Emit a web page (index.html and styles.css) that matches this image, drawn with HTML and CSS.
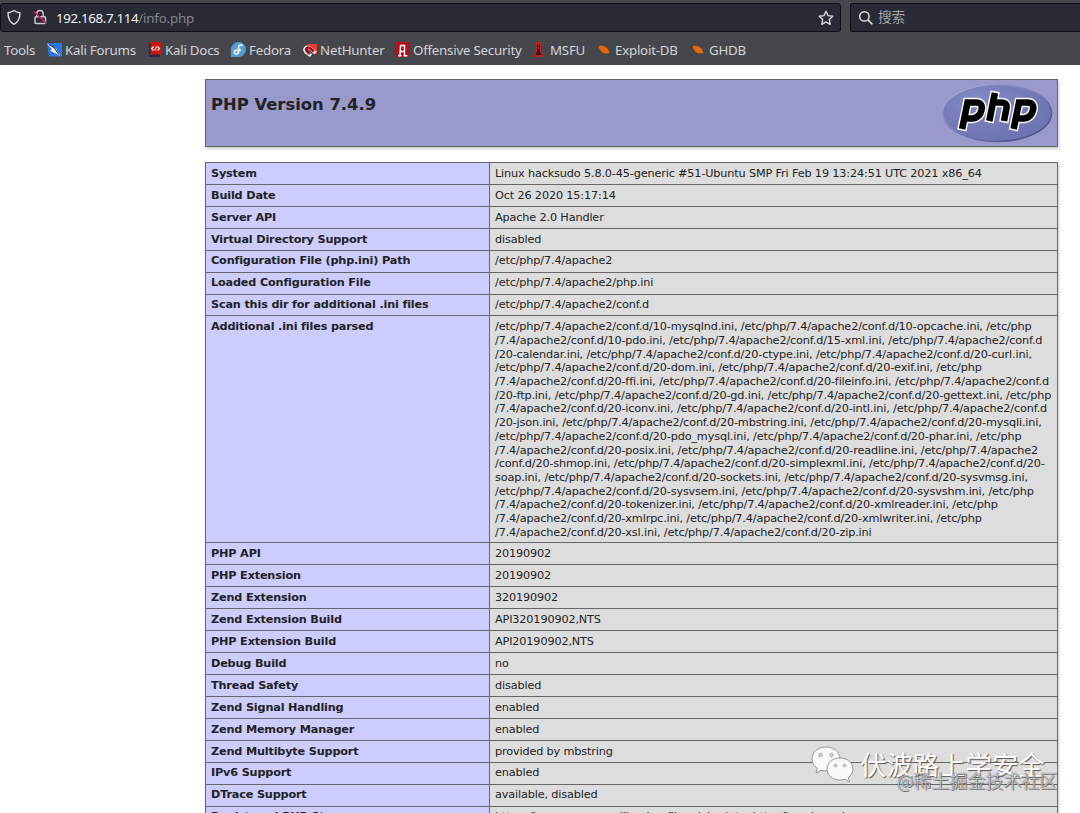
FILE: index.html
```html
<!DOCTYPE html>
<html lang="zh">
<head>
<meta charset="utf-8">
<title>phpinfo()</title>
<link rel="stylesheet" href="styles.css">
</head>
<body>
<header class="browser">
  <div class="toolbar">
    <div class="urlbar">
      <svg class="shield" width="16" height="17" viewBox="0 0 16 17"><path d="M8 1.500Q10.500 3.300 14 3.800C14 9.500 12 13.300 8 15.300 4 13.300 2 9.500 2 3.800Q5.500 3.300 8 1.500Z" fill="none" stroke="#dedee3" stroke-width="1.400" stroke-linejoin="round"/></svg>
      <svg class="lock" width="16" height="17" viewBox="0 0 16 17"><path d="M4.800 8V4.800a3.200 3.200 0 0 1 6.400 0V8" fill="none" stroke="#c9c9ce" stroke-width="1.500"/><rect x="3" y="7.800" width="10.500" height="6.700" rx="1" fill="none" stroke="#c9c9ce" stroke-width="1.500"/><path d="M2 2.600 14 14.200" stroke="#d01c55" stroke-width="1.600"/></svg>
      <span class="url">192.168.7.114<span class="path">/info.php</span></span>
      <svg class="star" width="16" height="16" viewBox="0 0 16 16"><path d="m8 1.300 2 4.300 4.800.6-3.500 3.200.9 4.900L8 11.900l-4.200 2.400.9-4.900L1.200 6.200 6 5.600Z" fill="none" stroke="#d6d6dc" stroke-width="1.400" stroke-linejoin="round"/></svg>
    </div>
    <div class="search">
      <svg width="16" height="16" viewBox="0 0 16 16"><circle cx="6.400" cy="6.400" r="4.700" fill="none" stroke="#dedee3" stroke-width="1.500"/><path d="m9.900 9.900 4.500 4.500" stroke="#dedee3" stroke-width="1.600"/></svg>
      <span>搜索</span>
    </div>
  </div>
  <nav class="bookmarks">
    <span class="mark tools">Tools</span>
    <span class="mark forums"><svg width="15" height="14" viewBox="0 0 15 14"><path d="M0 0h15v13.500H2Z" fill="#2876ea"/><path d="M0 .5 4.500 2.500 9 5.500 13.500 13 7 9.500 3 7.500 5 6.500Z" fill="#fff"/><path d="m2 1.500 5 3 5 7" fill="none" stroke="#26344b" stroke-width="1.100"/></svg><b>Kali Forums</b></span>
    <span class="mark docs"><svg width="12" height="15" viewBox="0 0 12 15"><path d="M0 0h12v13H0Z" fill="#ca1712"/><path d="M0 1h1.500v11.500H11V15H0Z" fill="#252b45"/><path d="m4.500 4.500-2 2 2 2m4-4 2 2-2 2M7.200 4.500 5.900 8.500" fill="none" stroke="#fff" stroke-width="1.100"/></svg><b>Kali Docs</b></span>
    <span class="mark fedora"><svg width="15" height="15" viewBox="0 0 15 15"><path d="M7.500 0a7.500 7.500 0 0 1 0 15H0V7.500A7.500 7.500 0 0 1 7.500 0Z" fill="#519fd9"/><path d="M11.300 4C10.500 2.400 7.600 2.700 7.600 5v4.500c0 3.500-5 3-4.200.3.500-1.700 2.500-1.700 4.200-1.700h2.300" fill="none" stroke="#fff" stroke-width="1.500"/></svg><b>Fedora</b></span>
    <span class="mark hunter"><svg width="14" height="14" viewBox="0 0 14 14"><path d="M4 1h10v11Z" fill="#f1392e"/><path d="M12.500 10 7.500 5.500C3.500 2.500 0 6 3 9l5 3.500" fill="none" stroke="#fff" stroke-width="3.400"/><path d="M11 8.500 7.500 5.500C4 3 1.500 6.500 4 8.500l3 2.500" fill="none" stroke="#a70b21" stroke-width="2.500"/></svg><b>NetHunter</b></span>
    <span class="mark offsec"><svg width="15" height="15" viewBox="0 0 15 15"><path d="M0 0h15v15H0Z" fill="#b3101d"/><path d="M5 13.500 5.500 3.500h4V13.500M3 13.800h3.500M8.500 13.800h3.800M5.500 9.500h4" fill="none" stroke="#fff" stroke-width="1.400"/></svg><b>Offensive Security</b></span>
    <span class="mark msfu"><svg width="11" height="15" viewBox="0 0 11 15"><path d="M2.500 0h6v10l2 2v3h-10v-3l2-2Z" fill="#b9211d"/><path d="M4 2h3v8l2 3H2l2-3Z" fill="#3c1718"/><path d="M4.500 3h2M4.500 6h2" stroke="#ee4033"/></svg><b>MSFU</b></span>
    <span class="mark exploit"><svg width="12" height="11" viewBox="0 0 12 11"><path d="M.5 2.500 3 1.500 7 2.500 10 5 11.500 9 8 9.500 4 8.500 1.500 5.500Z" fill="#e46a0c"/><path d="m.5 4 4 5m2-7 4 3" stroke="#923b0c" stroke-width=".7"/></svg><b>Exploit-DB</b></span>
    <span class="mark ghdb"><svg width="12" height="11" viewBox="0 0 12 11"><path d="M.5 2.500 3 1.500 7 2.500 10 5 11.500 9 8 9.500 4 8.500 1.500 5.500Z" fill="#e46a0c"/><path d="m.5 4 4 5m2-7 4 3" stroke="#923b0c" stroke-width=".7"/></svg><b>GHDB</b></span>
  </nav>
</header>
<main class="page">
  <section class="banner">
    <h1>PHP Version 7.4.9</h1>
    <svg class="logo" width="112" height="60" viewBox="0 0 112 60">
      <defs><radialGradient id="oval" cx=".35" cy=".3" r=".75"><stop offset="0" stop-color="#858dc5"/><stop offset=".55" stop-color="#747bb8"/><stop offset="1" stop-color="#6c73b0"/></radialGradient>
      <linearGradient id="rim" x1="0" y1="0" x2="1" y2="1"><stop offset="0" stop-color="#adb3e2"/><stop offset=".5" stop-color="#777db6"/><stop offset="1" stop-color="#373e79"/></linearGradient></defs>
      <ellipse cx="56" cy="30" rx="54.500" ry="28.500" fill="url(#oval)" stroke="url(#rim)" stroke-width="1.600"/>
      <g fill="none" stroke-linejoin="miter">
        <g stroke="#fff" stroke-width="9.400"><path d="M20.800 47.500 26.500 19.500H35Q42 19.500 40.500 27T31.500 35.500H24"/><path d="M54.200 8.300 48 39.500M52 19.500h8Q66.500 19.500 65.500 25L62.700 39.500"/><path d="M72.300 47.500 78 19.500H86.500Q93.500 19.500 92 27T83 35.500H75.500"/></g>
        <g stroke="#000" stroke-width="6.600"><path d="M21.100 46 26.500 19.500H35Q42 19.500 40.500 27T31.500 35.500H24"/><path d="M53.900 9.800 48.300 38M52 19.500h8Q66.500 19.500 65.500 25L63 38"/><path d="M72.600 46 78 19.500H86.500Q93.500 19.500 92 27T83 35.500H75.500"/></g>
      </g>
    </svg>
  </section>
  <dl class="info">
    <div class="row"><dt>System</dt><dd>Linux hacksudo 5.8.0-45-generic #51-Ubuntu SMP Fri Feb 19 13:24:51 UTC 2021 x86_64</dd></div>
    <div class="row"><dt>Build Date</dt><dd>Oct 26 2020 15:17:14</dd></div>
    <div class="row"><dt>Server API</dt><dd>Apache 2.0 Handler</dd></div>
    <div class="row"><dt>Virtual Directory Support</dt><dd>disabled</dd></div>
    <div class="row"><dt>Configuration File (php.ini) Path</dt><dd>/etc/php/7.4/apache2</dd></div>
    <div class="row"><dt>Loaded Configuration File</dt><dd>/etc/php/7.4/apache2/php.ini</dd></div>
    <div class="row"><dt>Scan this dir for additional .ini files</dt><dd>/etc/php/7.4/apache2/conf.d</dd></div>
    <div class="row parsed"><dt>Additional .ini files parsed</dt><dd>/etc/php/7.4/apache2/conf.d/10-mysqlnd.ini, /etc/php/7.4/apache2/conf.d/10-opcache.ini, /etc/php<br>/7.4/apache2/conf.d/10-pdo.ini, /etc/php/7.4/apache2/conf.d/15-xml.ini, /etc/php/7.4/apache2/conf.d<br>/20-calendar.ini, /etc/php/7.4/apache2/conf.d/20-ctype.ini, /etc/php/7.4/apache2/conf.d/20-curl.ini,<br>/etc/php/7.4/apache2/conf.d/20-dom.ini, /etc/php/7.4/apache2/conf.d/20-exif.ini, /etc/php<br>/7.4/apache2/conf.d/20-ffi.ini, /etc/php/7.4/apache2/conf.d/20-fileinfo.ini, /etc/php/7.4/apache2/conf.d<br>/20-ftp.ini, /etc/php/7.4/apache2/conf.d/20-gd.ini, /etc/php/7.4/apache2/conf.d/20-gettext.ini, /etc/php<br>/7.4/apache2/conf.d/20-iconv.ini, /etc/php/7.4/apache2/conf.d/20-intl.ini, /etc/php/7.4/apache2/conf.d<br>/20-json.ini, /etc/php/7.4/apache2/conf.d/20-mbstring.ini, /etc/php/7.4/apache2/conf.d/20-mysqli.ini,<br>/etc/php/7.4/apache2/conf.d/20-pdo_mysql.ini, /etc/php/7.4/apache2/conf.d/20-phar.ini, /etc/php<br>/7.4/apache2/conf.d/20-posix.ini, /etc/php/7.4/apache2/conf.d/20-readline.ini, /etc/php/7.4/apache2<br>/conf.d/20-shmop.ini, /etc/php/7.4/apache2/conf.d/20-simplexml.ini, /etc/php/7.4/apache2/conf.d/20-<br>soap.ini, /etc/php/7.4/apache2/conf.d/20-sockets.ini, /etc/php/7.4/apache2/conf.d/20-sysvmsg.ini,<br>/etc/php/7.4/apache2/conf.d/20-sysvsem.ini, /etc/php/7.4/apache2/conf.d/20-sysvshm.ini, /etc/php<br>/7.4/apache2/conf.d/20-tokenizer.ini, /etc/php/7.4/apache2/conf.d/20-xmlreader.ini, /etc/php<br>/7.4/apache2/conf.d/20-xmlrpc.ini, /etc/php/7.4/apache2/conf.d/20-xmlwriter.ini, /etc/php<br>/7.4/apache2/conf.d/20-xsl.ini, /etc/php/7.4/apache2/conf.d/20-zip.ini</dd></div>
    <div class="row"><dt>PHP API</dt><dd>20190902</dd></div>
    <div class="row"><dt>PHP Extension</dt><dd>20190902</dd></div>
    <div class="row"><dt>Zend Extension</dt><dd>320190902</dd></div>
    <div class="row"><dt>Zend Extension Build</dt><dd>API320190902,NTS</dd></div>
    <div class="row"><dt>PHP Extension Build</dt><dd>API20190902,NTS</dd></div>
    <div class="row"><dt>Debug Build</dt><dd>no</dd></div>
    <div class="row"><dt>Thread Safety</dt><dd>disabled</dd></div>
    <div class="row"><dt>Zend Signal Handling</dt><dd>enabled</dd></div>
    <div class="row"><dt>Zend Memory Manager</dt><dd>enabled</dd></div>
    <div class="row"><dt>Zend Multibyte Support</dt><dd>provided by mbstring</dd></div>
    <div class="row"><dt>IPv6 Support</dt><dd>enabled</dd></div>
    <div class="row"><dt>DTrace Support</dt><dd>available, disabled</dd></div>
    <div class="row"><dt>Registered PHP Streams</dt><dd>https, ftps, compress.zlib, php, file, glob, data, http, ftp, phar, zip</dd></div>
  </dl>
</main>
<div class="watermark">
  <svg width="44" height="38" viewBox="0 0 44 38"><g stroke="#8c8c8c" stroke-width=".9"><path d="M15 1C7 1 1 6.200 1 13c0 4 2 7.200 5.300 9.300L5 27l5-2.700c9 2.200 19-2 19-11.300C29 6.200 23 1 15 1Z" fill="#fafafa"/><path d="M29 12c-7.500 0-13 4.800-13 11s5.500 11 13 11c2 0 3.500-.3 5-.8l4.500 2.600-1.200-4.200C40 29.500 42 26.500 42 23c0-6.200-5.500-11-13-11Z" fill="#fafafa"/></g><g fill="#ddd" stroke="#888" stroke-width=".7"><circle cx="9.500" cy="9" r="1.700"/><circle cx="20.500" cy="9" r="1.700"/><circle cx="24.500" cy="19.500" r="1.400"/><circle cx="33.500" cy="19.500" r="1.400"/></g></svg>
  <span>伏波路上学安全</span>
</div>
<div class="credit">@稀土掘金技术社区</div>
</body>
</html>
```
FILE: styles.css
```css
* { box-sizing: border-box; }
body { margin: 0; width: 1080px; height: 813px; overflow: hidden; position: relative; background: #fff; font-family: "DejaVu Sans", sans-serif; color: #222; }
.browser { height: 65px; background: #46474c; font-family: "Noto Sans", "Noto Sans CJK SC", sans-serif; color: #d4d4d8; }
.toolbar { display: flex; gap: 9px; height: 32px; padding-top: 3px; }
.urlbar, .search { display: flex; align-items: center; height: 29px; border: 1px solid #101118; background: #282a36; border-radius: 3px; flex: none; }
.urlbar { width: 841px; padding: 0 6px 0 5px; }
.lock { margin-left: 10px; }
.url { margin-left: 8px; color: #f2f2f4; letter-spacing: -.4px; font-size: 13.4px; }
.path { color: #85868e; letter-spacing: -.2px; }
.star { margin-left: auto; }
.search { width: 230px; padding-left: 7px; border-right: 0; border-radius: 3px 0 0 3px; font-size: 13.6px; line-height: 18px; color: #a4a5ab; gap: 4px; }
.search span { margin-top: -1px; }
.bookmarks { height: 33px; display: flex; align-items: center; padding: 2px 0 0 4px; font-size: 13.3px; letter-spacing: -.23px; white-space: nowrap; }
.mark { display: flex; align-items: center; gap: 3px; flex: none; }
.mark b { font-weight: 400; }
.tools { width: 43px; }
.forums { width: 102px; }
.docs { width: 82px; gap: 4px; }
.fedora { width: 72px; }
.hunter { width: 92px; }
.offsec { width: 138px; }
.msfu { width: 65px; gap: 6px; }
.exploit { width: 94px; gap: 5px; }
.ghdb { gap: 5px; }
.page { margin: 14px 22px 0 205px; }
.banner { display: flex; justify-content: space-between; height: 68px; border: 1px solid #666; background: #9999cc; box-shadow: 1px 2px 3px #ccc; padding: 3px 4px 0 5px; }
h1 { margin: 12px 0 0; font-size: 16.4px; line-height: 20px; }
.info { margin: 15px 0 0; border: 1px solid #666; border-bottom: 0; box-shadow: 1px 2px 3px #ccc; font-size: 11.25px; letter-spacing: -.15px; line-height: 13.7px; white-space: nowrap; }
.row { display: grid; grid-template: 100% / 284px 1fr; height: 21.93px; border-bottom: 1px solid #666; background: #ddd; }
.parsed { height: 227px; }
dt { background: #ccccff; border-right: 1px solid #666; padding: 3.8px 5px 0; font-weight: 700; letter-spacing: -.175px; }
dd { margin: 0; padding: 3.8px 5px 0; }
.watermark { position: absolute; left: 811px; top: 746px; display: flex; align-items: flex-start; gap: 5px; color: #fff; font: 26.4px/36px "Noto Sans CJK SC", sans-serif; text-shadow: 1px 1px 1px #555; white-space: nowrap; }
.credit { position: absolute; left: 897px; top: 768px; font: 300 18px/24px "Noto Sans CJK SC", sans-serif; color: #ccc; text-shadow: 0 0 1px #444, 1px 1px 0 #777; white-space: nowrap; }
```
